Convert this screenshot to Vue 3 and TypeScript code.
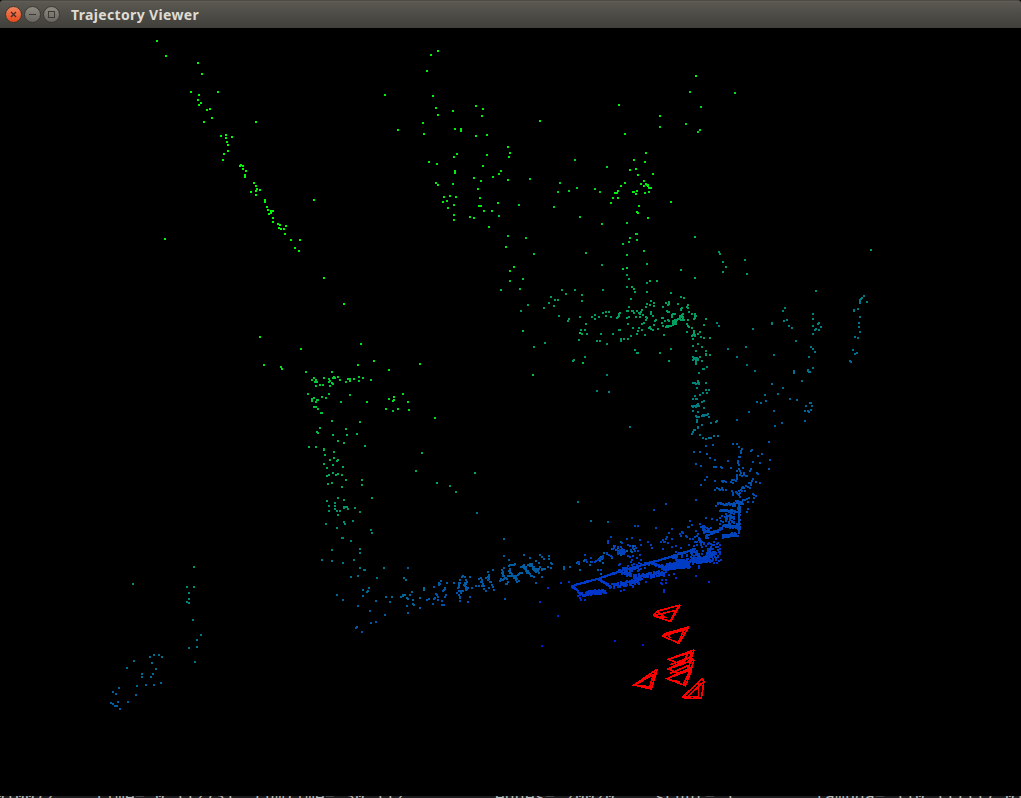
<script setup lang="ts">
// Point coordinates are stored in thirds of a pixel relative to each patch's origin.
interface Patch {
  x: number
  y: number
  // depth at the two given screen rows; 0 is far (green), 1 is near (blue)
  depth: [row0: number, d0: number, row1: number, d1: number]
  pts: string
}
// Segment sampled with n jittered points
type Band = [x0: number, y0: number, x1: number, y1: number, spread: number, n: number]

const patches: Patch[] = [
  {
    x: 100, y: 30, depth: [30, 0.02, 270, 0.02],
    pts: `171,33 198,78 294,99 306,132 273,186 354,186 297,195 294,210 303,219 297,225 330,237 321,240 336,264 312,276 468,276
    363,318 378,315 378,324 396,321 381,336 384,345 384,363 372,372 369,390 423,405 420,408 429,408 429,417 438,423 435,435 435,441
    462,459 468,468 471,477 468,483 480,480 453,486 468,495 495,510 495,516 501,531 504,540 513,543 519,543 513,549 507,552 519,564
    519,576 534,582 540,585 558,588 537,594 543,597 552,597 555,612 573,630 600,630 585,654 597,663 642,510 195,627 672,744 732,822`,
  },
  {
    x: 370, y: 40, depth: [40, 0.02, 300, 0.1],
    pts: `204,33 183,45 171,93 45,165 189,168 198,204 204,225 249,213 318,198 339,207 336,228 159,249 84,270 162,282 255,267 273,267 273,273
    318,288 351,285 261,342 252,351 351,345 177,366 201,372 339,378 255,393 255,399 312,414 333,423 369,411 387,402 393,393 414,321 420,339
    417,351 414,420 510,243 198,429 204,435 249,432 324,447 222,471 240,468 258,471 219,486 231,483 252,495 234,504 330,474 327,498 333,498
    342,513 366,513 384,489 252,525 252,540 300,531 312,534 357,561 408,621 432,681 420,693`,
  },
  {
    x: 370, y: 40, depth: [130, 0.1, 300, 0.24],
    pts: `480,417 447,495 387,528 414,588 468,594 492,642 459,717 420,723 450,747 393,750`,
  },
  {
    x: 500, y: 60, depth: [70, 0.03, 200, 0.06],
    pts: `588,48 357,135 480,168 375,222 438,279 402,300 435,306 390,330 408,327 414,345 459,342 432,363 375,369 363,378 423,372 432,378
    438,372 444,375 441,374 444,378 447,384 453,384 447,396 435,399 411,393 399,396 403,396 408,402 354,393 345,399 351,399 339,414 354,414
    333,429 513,426 417,438 411,456 414,459 444,474`,
  },
  {
    x: 500, y: 60, depth: [80, 0.12, 250, 0.2],
    pts: `570,96 705,99 603,141 480,201 558,192 600,210 594,216 225,300 321,321 180,369 231,384 207,393 174,396 285,387 300,396
    162,441 240,471 306,492 381,489 408,522 411,522 390,534 387,546 411,540 369,552 432,573 381,585 381,624 369,627`,
  },
  {
    x: 500, y: 60, depth: [230, 0.24, 300, 0.32],
    pts: `585,531 258,579 441,612 543,630 585,654 450,663 471,663 396,681 402,687 405,696 441,696`,
  },
  {
    x: 500, y: 60, depth: [240, 0.4, 300, 0.36],
    pts: `657,576 660,582 669,606 678,621 669,636 735,600 741,642 306,615 381,645 387,657 381,681 441,669 513,699 543,711 552,714
    186,690 198,702 225,690 246,705 309,690 153,711 165,720 174,720 393,717`,
  },
  {
    x: 500, y: 240, depth: [290, 0.36, 350, 0.39],
    pts: `147,189 162,198 132,204 84,195 63,213 177,228 207,237 204,243 240,231 246,183 276,231 285,225 285,237 297,231 309,219 318,216
    327,216 318,228 333,231 360,219 357,222 357,228 354,231 351,234 381,213 384,213 387,201 396,213 399,213 402,219 411,213 417,219 420,222
    426,210 423,216 429,225 420,231 408,231 387,231 381,234 441,192 438,201 453,183 462,189 450,195 462,198 453,216 453,222 459,228 438,231
    441,234 438,240 468,240 465,243 462,255 426,252 432,249 384,252 399,264 417,264 426,270 414,273 411,282 393,288 435,285 447,264 450,261
    453,267 459,270 474,267 489,201 498,189 507,186 507,192 504,195 501,213 507,216 504,216 519,222 525,222 516,225 516,231 486,234 489,234
    495,243 504,240 507,243 486,249 489,258 498,261 501,258 504,261 507,258 513,258 519,255 519,249 522,246 525,246 528,246 525,252 528,252
    519,243 525,240 531,240 534,237 537,237 540,234 543,231 540,228 546,225 549,222 543,210 546,204 543,207 534,192 561,201 564,204 564,195
    567,216 576,222 585,222 585,228 588,228 585,234 582,237 549,231 549,237 546,240 552,240 543,240 564,240 540,237 546,231 561,252 564,258
    567,261 576,264 561,276 492,285 618,237 612,255 651,249 657,258 258,252 243,270 255,270 246,282 261,282 237,300 303,282 339,282 357,270
    360,270 291,303 300,303 321,312 363,297 363,303 372,297 384,297 135,309 102,321 405,330 411,339 414,339 480,339 513,327 507,363 255,351
    219,363 222,360`,
  },
  { x: 500, y: 240, depth: [290, 0.2, 430, 0.25], pts: `69,273 240,279 249,369 99,405` },
  {
    x: 500, y: 240, depth: [325, 0.38, 440, 0.57],
    pts: `582,273 582,279 585,285 579,285 576,288 585,288 579,297 594,282 600,276 603,291 612,294 630,294 594,312 579,318 606,321 588,333
    618,333 618,342 618,345 630,345 684,327 711,351 579,351 585,354 588,357 591,354 594,357 600,351 579,360 582,357 588,363 591,360 594,360
    588,369 588,372 606,363 621,381 609,387 612,387 597,399 594,423 597,429 594,429 588,432 585,429 579,429 597,432 618,429 591,444 618,450
    627,450 621,459 609,459 600,465 585,468 579,477 588,477 591,477 606,486 612,483 594,492 591,495 576,498 579,498 585,498 588,501 591,498
    597,498 579,501 612,504 579,513 594,516 588,528 591,531 597,531 606,528 609,525 612,528 615,525 618,525 621,525 624,522 627,531
    591,540 591,546 606,555 594,561 594,564 585,570 582,570 579,576 576,582 600,585 633,549 648,546 651,543 609,594 618,597 627,594 633,594
    642,588 654,588 321,405 291,453 327,456`,
  },
  { x: 500, y: 240, depth: [400, 0.52, 450, 0.54], pts: `390,561 711,540` },
  {
    x: 680, y: 240, depth: [240, 0.38, 450, 0.66],
    pts: `573,30 408,153 315,204 309,213 399,222 399,237 312,243 321,240 276,249 276,252 327,258 336,264 219,267 111,249 117,258
    417,249 414,252 399,258 423,261 408,267 405,270 417,270 399,282 348,303 198,321 144,327 393,321 399,327 405,336 282,345 387,351 171,351
    201,375 225,393 399,384 384,390 387,396 390,396 384,393 342,393 342,399 366,423 276,432 309,444 294,462 255,465 258,483 243,489 231,486
    330,477 351,480 390,489 393,489 378,498 396,498 393,510 384,513 387,516 375,513 282,513 207,516 375,543 171,540 306,549 285,558`,
  },
  {
    x: 680, y: 240, depth: [280, 0.5, 370, 0.6],
    pts: `552,168 546,174 543,177 540,180 540,186 540,189 561,186 534,207 522,210 522,213 540,231 537,249 537,261 540,276 525,291 534,294
    519,330 531,339 525,342 510,363 513,366`,
  },
  {
    x: 560, y: 430, depth: [440, 0.65, 560, 0.76],
    pts: `438,48 459,45 402,66 420,66 441,72 450,84 465,90 408,102 423,108 462,111 468,111 483,111 486,114 504,93 441,141 435,150 423,165
    408,210 519,42 531,42 537,51 546,57 543,63 543,69 537,81 540,81 534,93 537,105 534,99 573,63 576,60 594,78 606,72 579,96 600,99 627,36
    630,90 627,117 573,117 570,123 549,114 537,117 540,123 543,129 552,129 531,123 513,114 465,153 486,153 492,153 489,156 498,156 516,150
    522,150 513,156 519,159 528,153 531,147 531,141 531,135 540,135 546,138 552,135 558,138 561,138 579,147 576,153 573,159 567,159 573,165
    591,129 594,132 600,159 588,156 465,180 471,174 477,177 480,180 486,177 489,180 498,180 486,174 516,183 519,189 519,195 528,186 531,189
    537,183 540,189 534,192 543,180 546,183 546,174 549,171 552,174 558,168 564,171 570,174 555,183 537,195 540,201 579,192 582,195 588,198
    582,204 561,207 567,204 555,210 549,210 564,216 579,216 564,237 561,246 468,228 282,240 318,222 225,288 234,288
    288,294 336,297 153,321 144,333 144,339 54,399 75,375 30,411 12,411 12,414 3,459 27,456 123,420 93,385 57,396 78,390 81,396 96,396
    105,396 108,393 114,390 120,387 126,384 129,378 129,384 123,387 141,369 147,375 153,378 156,381 162,354 165,348 159,357 174,351
    183,351 186,339 201,327 216,324 240,330 243,345 225,348 219,354 228,354 210,348 213,360 225,363 234,363 240,375 204,378 210,381
    219,378 231,384 180,402 177,405 171,360 174,366 180,366 183,369 186,372 189,366 192,366 195,366 186,363 180,360 192,360 192,372
    174,372 186,357 264,336 273,345 276,354 303,336 309,330 318,327 312,336 315,336 321,321 327,309 324,339 336,351 336,327 360,312
    363,318 366,306 369,309 378,318 381,321 384,291 387,291 396,285 390,273 405,321 399,327 414,312 420,282 438,264 429,288 429,294
    432,309 438,324 441,318 447,315 453,309 456,312 462,309 468,306 474,306 456,267 471,270 480,264 483,273 480,282 489,276 480,294
    204,345 216,390 243,390 252,405 270,396 282,393 309,357 348,348 363,354 387,345 390,327 405,336 417,330 423,345 402,348 432,339 453,351`,
  },
  { x: 560, y: 430, depth: [495, 0.5, 525, 0.62], pts: `54,216 93,273 144,276` },
  {
    x: 560, y: 430, depth: [500, 0.75, 650, 0.86],
    pts: `447,456 408,438 417,414 417,408 390,411 348,444 312,480 312,486 306,462 318,459 303,459 306,450 318,450 327,435 300,435 342,432
    183,483 192,480 219,471 237,462 258,456 54,498 60,504 63,510 75,510 60,495 471,399 462,399 447,390 480,345 474,351 480,357 456,345
    462,336 447,339 468,327 438,348 444,363 459,357 468,369 477,366 480,372 444,375`,
  },
  { x: 400, y: 500, depth: [580, 0.8, 642, 0.9], pts: `474,348 426,438 420,306 444,264 483,249 507,246 645,423 729,435` },
  {
    x: 240, y: 330, depth: [330, 0.05, 400, 0.13],
    pts: `60,21 183,57 72,105 123,111 126,117 402,93 363,42 540,102 354,105 447,120 489,192 381,216 504,216 507,240 462,201 447,207 462,210
    459,213 438,237 474,237 585,264`,
  },
  {
    x: 240, y: 330, depth: [370, 0.18, 520, 0.39],
    pts: `198,126 276,126 222,144 216,150 228,150 225,156 231,156 228,168 240,165 249,165 252,144 267,147 270,153 267,156 276,159 279,162
    270,168 282,141 279,144 285,144 294,141 300,150 318,156 324,147 330,147 330,153 342,147 357,141 369,144 357,153 393,150 204,192 267,192
    330,195 246,201 258,204 222,204 216,207 216,213 231,210 234,210 228,216 303,216 222,231 228,231 234,237 243,249 246,249 459,243 276,273
    360,276 240,294 231,306 234,309 318,297 279,315 321,315 351,312 294,333 312,339 375,348 207,351 228,351 252,357 252,360 255,375
    282,366 282,384 270,390 294,390 291,393 252,402 279,405 261,414 309,411 261,438 267,435 279,429 288,435 294,432 306,435 318,450
    366,450 366,465 264,462 276,459 306,471 546,369 528,423 705,429 591,459 396,504 294,504 312,510 261,513`,
  },
  {
    x: 240, y: 330, depth: [500, 0.4, 640, 0.69],
    pts: `285,519 267,528 285,528 285,537 267,543 291,543 300,543 294,555 312,531 318,531 321,531 312,534 324,537 345,534 360,546
    339,573 312,576 315,582 258,582 291,594 393,600 396,609 306,624 309,624 333,633 276,660 360,657 360,669 246,690 276,693 309,699 342,690
    360,714 372,720 375,720 432,714 504,714 354,738 333,741 411,744 387,774 369,780 384,783 381,786 369,798 291,795 309,810 408,813 354,828
    390,843 435,855 408,876 393,879 351,891 348,894 366,906 630,468 648,486 711,549 492,744 498,750 438,801 456,801 450,816 483,801 489,795
    492,795 495,795 489,798 501,804 504,807 516,786 510,795 519,810 519,822 522,825 501,828 504,849 540,804 540,834 552,774 552,780`,
  },
  {
    x: 400, y: 500, depth: [500, 0.55, 610, 0.69],
    pts: `231,39 534,6 312,117 573,63 624,66 24,204 123,243 117,249 120,252 117,255 102,261 135,264 132,270 129,273 141,249 138,285 135,291
    108,282 111,285 114,291 105,294 102,297 87,297 81,300 114,300 99,312 126,303 126,315 132,315 162,249 189,228 186,231 195,231 180,240
    210,231 198,240 201,246 198,249 177,249 177,255 177,261 174,264 192,255 195,258 198,264 201,264 204,264 201,267 198,270 216,264 177,273
    183,273 189,273 183,279 171,279 177,285 180,291 180,303 210,291 204,306 228,258 237,258 279,210 264,216 267,225 267,231 264,231 258,234
    267,237 264,240 270,246 273,246 276,255 279,261 267,264 282,270 237,237 243,234 246,240 243,246 246,246 249,252 246,258 252,258 252,267
    258,273 312,168 327,180 312,204 372,165 390,174 420,165 426,171 432,177 447,168 447,177 408,183 417,189 453,189 456,192 345,192 342,195
    336,195 330,195 327,198 330,207 306,210 309,216 309,222 306,219 309,228 312,228 315,234 318,234 321,237 312,237 309,240 303,237
    300,243 303,240 324,246 321,252 318,252 324,228 327,213 330,213 330,219 333,219 336,222 330,228 336,228 339,228 342,228 342,234 345,228
    348,228 348,234 351,237 345,234 354,225 357,222 360,219 363,219 366,219 351,246 357,243 348,240 363,201 366,201 369,198 372,195 375,201
    378,201 372,204 375,207 378,207 378,213 384,213 381,216 381,219 384,219 387,219 390,222 393,228 396,228 402,231 390,192 393,192 396,192
    384,195 387,195 390,198 396,198 399,201 402,201 399,207 402,210 405,207 408,207 411,207 405,213 408,216 411,213 414,213 417,207
    420,201 417,219 426,210 426,207 432,207 435,207 444,201 453,204 426,231 408,249 315,297 492,204 492,201 492,207 510,201
    531,189 534,186 537,192 552,183 555,180 555,165 573,174 561,186 573,186 576,186 585,186 588,183 597,177 600,174 603,171 606,177 609,189
    600,183 612,159 621,162 627,165 633,168 636,174 624,123 624,129 633,111 642,138 636,147 648,150 654,144 657,153 660,159 666,156 669,156
    672,159 663,165 663,126 666,129 681,117 696,114 681,153 693,153 696,156 702,147 699,138 705,138 705,78 714,78 540,210 594,210 570,195 603,222`,
  },
  {
    x: 240, y: 330, depth: [560, 0.63, 610, 0.67],
    pts: `582,771 597,759 600,762 597,765 603,753 621,759 615,774 612,780 609,783 615,777 588,792 591,795 594,801 615,801 618,795
    585,804 582,807 567,807 561,810 594,810 606,813 579,822 606,825 612,825 642,759 660,750 660,759 657,765 657,771 654,774 657,783 660,783
    663,783 669,783 651,789 663,789 657,795 660,804 660,813 684,816 690,801 666,741 669,738 675,741 690,741 678,750 681,756 675,759 678,762
    675,765 678,771 681,774 678,780 684,774 696,774`,
  },
  {
    x: 100, y: 560, depth: [560, 0.42, 710, 0.64],
    pts: `99,72 282,21 261,81 282,81 267,99 267,117 267,129 261,126 279,180 303,225 291,240 291,261 267,264 285,306
    162,285 177,285 186,291 150,291 102,303 156,309 81,324 168,327 126,342 159,342 153,351 126,351 183,369 162,375 111,378 138,375
    57,384 39,396 48,402 108,405 84,426 33,429 39,432 54,426 45,438 51,438 60,447`,
  },
]

const bands: Band[] = [
  // upper ridge
  [35, 468, 115, 446, 1, 30], [115, 446, 180, 424, 1, 26], [180, 424, 300, 390, 1, 46], [300, 390, 405, 357, 1, 42],
  // left corner and lower edge
  [35, 468, 75, 500, 2, 22], [78, 492, 108, 483, 3, 22], [85, 488, 135, 485, 7, 48], [115, 446, 155, 472, 2, 24],
  [155, 468, 240, 454, 8, 85], [180, 424, 240, 446, 5, 55], [240, 441, 315, 427, 8, 80],
  [190, 417, 240, 420, 6, 20], [275, 400, 325, 418, 3, 34], [310, 412, 380, 403, 9, 120],
  [335, 378, 365, 396, 5, 36], [370, 397, 455, 386, 9, 130], [375, 402, 385, 412, 5, 12],
  [400, 360, 415, 380, 7, 24], [435, 372, 476, 380, 13, 34], [345, 372, 400, 376, 7, 14],
  [205, 403, 270, 405, 10, 12],
  // right column
  [472, 220, 514, 223, 3, 24], [522, 222, 544, 216, 7, 42], [480, 241, 536, 245, 3, 34], [537, 225, 537, 308, 2, 44],
  [490, 288, 535, 292, 4, 34], [490, 320, 533, 312, 5, 46], [436, 320, 490, 294, 2, 20], [505, 255, 520, 280, 16, 24],
  [428, 293, 450, 302, 9, 24], [485, 255, 530, 282, 9, 14], [455, 338, 465, 365, 16, 18], [410, 320, 435, 340, 18, 14],
]

const shade = (d: number) => {
  const q = Math.round(Math.min(1, Math.max(0, d)) * 64) / 64
  return `rgb(0,${Math.round(255 * (1 - q))},${Math.round(255 * q)})`
}

const layers = new Map<string, string>()
const dot = (x: number, y: number, colour: string) => {
  layers.set(colour, (layers.get(colour) ?? '') + `M${Math.round(x)} ${Math.round(y)}h2v2h-2z`)
}

for (const p of patches) {
  const [r0, d0, r1, d1] = p.depth
  for (const pair of p.pts.trim().split(/\s+/)) {
    const [u, v] = pair.split(',').map(Number)
    const y = p.y + (v - 3) / 3
    const k = Math.min(1, Math.max(0, (y - r0) / (r1 - r0)))
    dot(p.x + (u - 3) / 3, y, shade(d0 + (d1 - d0) * k))
  }
}

let seed = 20020
const rnd = () => {
  seed = (seed * 1664525 + 1013904223) % 4294967296
  return seed / 4294967296
}
for (const [x0, y0, x1, y1, spread, n] of bands) {
  for (let i = 0; i < n; i++) {
    const t = (i + 0.5) / n
    const jx = (rnd() - 0.5) * 2 * spread
    const jy = (rnd() - 0.5) * 2 * spread
    const y = 430 + (y0 + (y1 - y0) * t + jy - 3) / 3
    dot(560 + (x0 + (x1 - x0) * t + jx - 3) / 3, y, shade(0.7 + ((y - 500) / 70) * 0.07))
  }
}

const clouds = [...layers].map(([fill, d]) => ({ fill, d }))

// Camera frusta
const frusta = [
  'M180 45L111 64L101 77L152 95L180 45M168 61L180 45M168 61L101 77M168 61L152 93M111 64L135 82L120 82M111 66L124 75',
  'M206 111L138 130L128 138L177 160L206 111M201 117L128 138M198 118L145 133L150 145M190 124L176 156',
  'M222 180L145 208L180 222M222 180L210 217M145 208L213 187M205 187L190 218M215 183L207 215',
  'M222 210L145 237L180 252M222 210L212 243M145 237L210 203L222 210M214 199L205 238M150 224L205 205',
  'M216 238L141 266L196 287L216 238M141 266L214 232M150 270L180 276M210 243L190 283M200 225L212 252M150 250L208 226',
  'M112 237L42 285L94 297L112 237M47 283L100 254L90 289M60 287L94 291M104 245L100 270',
  'M246 266L189 321L197 326L244 324L252 274L246 266M252 274L197 326M236 277L236 319L189 321',
]

const consoleLine =
  '010072    time= 0.112731  cumTime= 30.112         edges= 20020    schur= 1        lambda= 110.111117.010'
</script>

<template>
  <div class="screen">
    <header class="titlebar">
      <svg class="controls" width="60" height="28" viewBox="0 0 60 28">
        <defs>
          <linearGradient id="closeFill" x1="0" y1="0" x2="0" y2="1">
            <stop offset="0" stop-color="#f58560" />
            <stop offset="1" stop-color="#e2491b" />
          </linearGradient>
          <linearGradient id="buttonFill" x1="0" y1="0" x2="0" y2="1">
            <stop offset="0" stop-color="#8e8c83" />
            <stop offset="1" stop-color="#66645d" />
          </linearGradient>
        </defs>
        <circle cx="13.5" cy="14.5" r="8" fill="url(#closeFill)" stroke="#383731" />
        <circle cx="32.5" cy="14.5" r="8" fill="url(#buttonFill)" stroke="#383731" />
        <circle cx="51.5" cy="14.5" r="8" fill="url(#buttonFill)" stroke="#383731" />
        <path d="M11 12l5 5M16 12l-5 5" stroke="#4a2b20" stroke-width="1.3" />
        <path d="M29 14.5h7" stroke="#3b3a35" />
        <rect x="48.5" y="11.5" width="6" height="6" fill="none" stroke="#3b3a35" />
      </svg>
      <h1 class="title">Trajectory Viewer</h1>
    </header>
    <svg class="view" width="1021" height="768" viewBox="0 28 1021 768">
      <g shape-rendering="crispEdges">
        <path v-for="c in clouds" :key="c.fill" :d="c.d" :fill="c.fill" />
      </g>
      <g class="frusta" transform="translate(620 590) scale(0.33333)">
        <path v-for="(f, i) in frusta" :key="i" :d="f" />
      </g>
    </svg>
    <div class="terminal"><pre class="line">{{ consoleLine }}</pre></div>
  </div>
</template>

<style>
html,
body {
  background: #000;
  overflow: hidden;
}
</style>

<style scoped>
.screen {
  width: 1021px;
  height: 798px;
  display: flex;
  flex-direction: column;
  background: #000;
  overflow: hidden;
}
.titlebar {
  flex: none;
  box-sizing: border-box;
  height: 28px;
  display: flex;
  align-items: center;
  border-top: 1px solid #4d4b45;
  border-radius: 3px 3px 0 0;
  background: linear-gradient(#605e56 0, #595750 2px, #403f3a 100%);
}
.controls {
  flex: none;
  margin-top: -1px;
}
.title {
  margin: 0 0 0 11px;
  font: bold 14px/28px "Noto Sans", "Open Sans", sans-serif;
  letter-spacing: 0.35px;
  color: #dfdbd2;
  white-space: nowrap;
}
.view {
  flex: none;
  display: block;
}
.frusta {
  fill: none;
  stroke: #f00;
  stroke-width: 5;
  shape-rendering: crispEdges;
}
.terminal {
  flex: none;
  height: 2px;
  overflow: hidden;
  background: #1b1d1e;
}
.line {
  margin: -8px 0 0 -5px;
  font: 16px/18px "DejaVu Sans Mono", monospace;
  letter-spacing: 0.367px;
  color: #b8b8b8;
}
</style>
